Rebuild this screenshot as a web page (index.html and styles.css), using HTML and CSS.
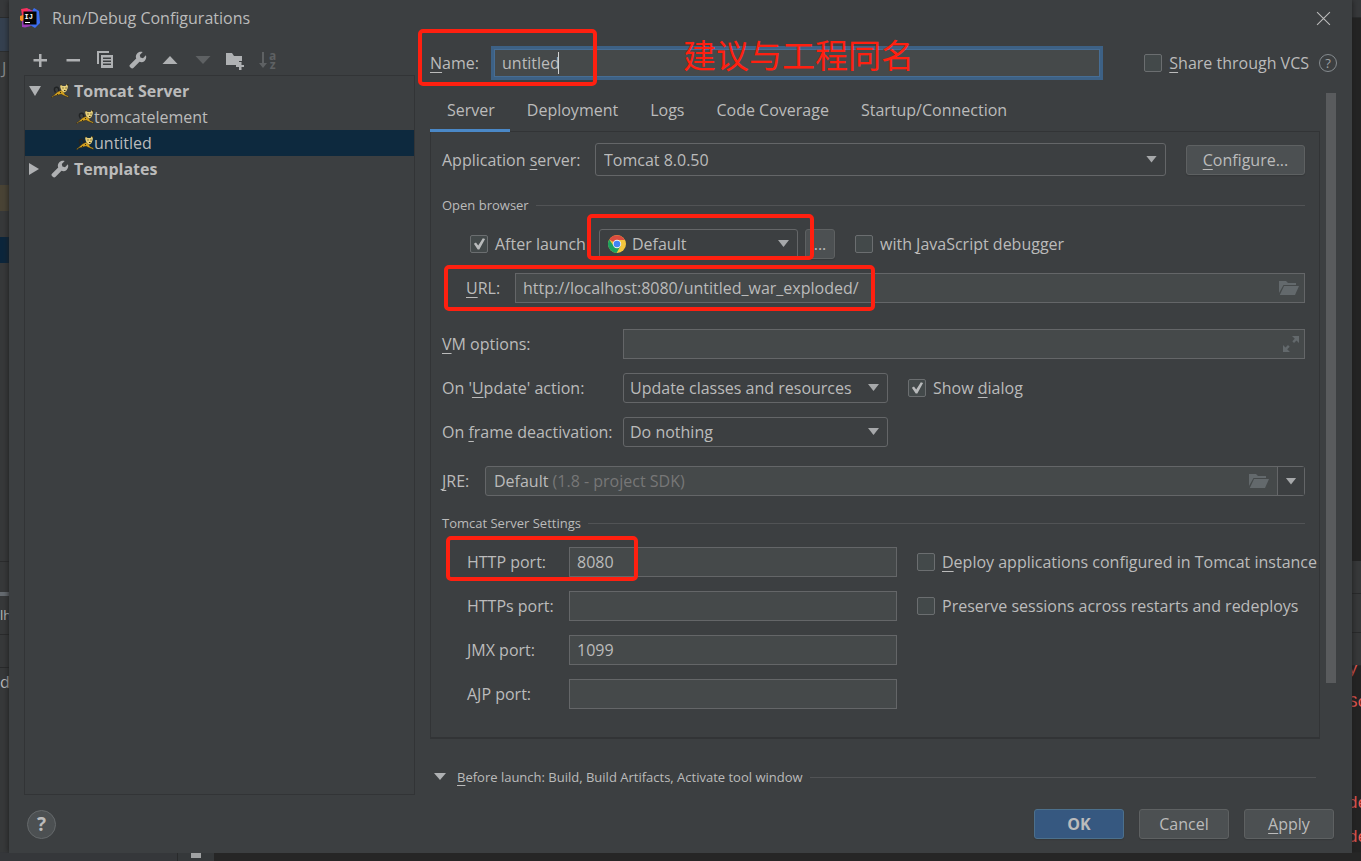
FILE: index.html
```html
<!DOCTYPE html>
<html lang="en">
<head>
<meta charset="utf-8">
<title>Run/Debug Configurations</title>
<link rel="stylesheet" href="styles.css">
</head>
<body>
<svg class="defs" aria-hidden="true">
  <symbol id="wrench" viewBox="0 0 18 18"><path d="M16.9 4.3 14 7.2l-2.6-.6-.6-2.6L13.700 1.100C11.700.400 9.500.900 8.100 2.400 6.800 3.800 6.500 5.700 7.200 7.500L1.200 13.400a1.900 1.900 0 0 0 0 2.800l.6.6a1.900 1.900 0 0 0 2.800 0l5.900-6c1.800.7 3.700.4 5.100-.9 1.500-1.400 2-3.600 1.300-5.600z"/></symbol>
  <symbol id="folder" viewBox="0 0 20 16"><path d="M0 1h7l2 2h8v2H4.500L0 13z"/><path d="M5 6h15l-4 9H.800z"/></symbol>
  <symbol id="tomcat" viewBox="0 0 18 14"><path d="M4.500 8.500C2 5 4 2.800 6 3.300S8 6 7.500 7.500" fill="none" stroke="#202324" stroke-width="1.500"/><path d="M0 13.500 3.500 10.500 7 7.500l3.500-1.300 2.500 2 1 2.300 3.500 1.500v1.500l-5-2-2.500-1.300-3.500 1-3.500.8-1.500 1.500z" fill="#d2a01f" stroke="#24211a" stroke-width=".5"/><path d="M9 1h1.500l1 1h3l1-1.500H17l-.3 3.500-1.200 3-1.500 1.200h-1.500L10.500 6.500 9.500 4z" fill="#e6cf7a"/><path d="M9 .5h1.500v1H9zM16 0h1.500v1.500H16zM11.500 3.500h1v1h-1zM14.500 3.500h1v1h-1zM13 6h1.500v1H13zM9 8h1v1H9zM6 10h1v1H6z" fill="#3a2f12"/></symbol>
</svg>

<div class="backdrop" aria-hidden="true">
  <div class="strip strip-left">
    <div class="s-top"></div><div class="s-blue"></div><div class="s-text s-j">J</div>
    <div class="s-brown"></div><div class="s-gap"></div><div class="s-navy"></div>
    <div class="s-long"></div><div class="s-bar"></div><div class="s-text s-lh">lh</div>
    <div class="s-band"></div><div class="s-text s-d">d</div>
  </div>
  <div class="strip strip-right">
    <div class="s-top"></div><div class="s-editor"></div><div class="s-band"></div><div class="s-band"></div><div class="s-band"></div>
    <div class="console"><p class="cut">y.</p><p>So</p><p class="later">de</p><p>de</p></div>
  </div>
  <div class="dock"><span class="dock-main"></span><span class="dock-tool"><i></i></span></div>
</div>

<main class="dialog">
  <header class="titlebar">
    <svg class="logo" viewBox="0 0 20 20"><path d="M1 1 7 0l5 3-3 7-8 1 1-4z" fill="#fc315e"/><path d="M0 8l6-2 4 10-6-1L0 12z" fill="#f78c25"/><path d="M2 13l6-3 3 8-6 1.500-3-.5z" fill="#9a3bb8"/><path d="M12 3l2-3 5 3 1 12-5 5-5-3z" fill="#3b6df0"/><path d="M9 1l4 2-3 5-4-3z" fill="#c838a0"/><path d="M3.500 3.500h13v13h-13z" fill="#050505"/><text x="4.500" y="10.500" class="logo-text">IJ</text><path d="M5 14h5v1H5z" fill="#fff"/></svg>
    <h1>Run/Debug Configurations</h1>
    <button class="close" aria-label="Close"><svg viewBox="0 0 14 14"><path d="M1 1l12 12M13 1 1 13"/></svg></button>
  </header>

  <div class="content">
    <aside class="sidebar">
      <div class="toolbar">
        <button aria-label="Add"><svg viewBox="0 0 18 18"><path d="M8 3h2.500v5H16v2.500h-5.500V16H8v-5.500H2.500V8H8z"/></svg></button>
        <button aria-label="Remove"><svg viewBox="0 0 18 18"><path d="M2.500 8H16v2.500H2.500z"/></svg></button>
        <button aria-label="Copy"><svg viewBox="0 0 18 18"><path d="M1 0h12v2H3v11H1z"/><path fill-rule="evenodd" d="M5 4h12v13H5zM7 6.500h8V8H7zm0 3h8V11H7zm0 3h8V14H7z"/></svg></button>
        <button aria-label="Edit templates"><svg><use href="#wrench"/></svg></button>
        <button aria-label="Move up"><svg viewBox="0 0 18 18"><path d="M9 5l7.500 8h-15z"/></svg></button>
        <button class="off" aria-label="Move down"><svg viewBox="0 0 18 18"><path d="M1.500 5h15L9 13z"/></svg></button>
        <button aria-label="Create folder"><svg viewBox="0 0 18 18"><path d="M0 2h6l2 3h8v5h-3v4H0z"/><path d="M13 11h2.500v3H18v2h-2.500v3H13v-3h-3v-2h3z"/></svg></button>
        <button class="off sort" aria-label="Sort alphabetically"><svg viewBox="0 0 8 18"><path d="M3 1h2v11h3l-4 5-4-5h3z"/></svg><span><span>a</span><span>z</span></span></button>
      </div>
      <div class="tree" role="tree">
        <div class="node parent" role="treeitem" aria-expanded="true"><svg class="twist" viewBox="0 0 12 12"><path d="M0 1h12L6 11z"/></svg><svg class="cat"><use href="#tomcat"/></svg><b>Tomcat Server</b></div>
        <div class="node child" role="treeitem"><svg class="cat"><use href="#tomcat"/></svg>tomcatelement</div>
        <div class="node child selected" role="treeitem" aria-selected="true"><svg class="cat"><use href="#tomcat"/></svg>untitled</div>
        <div class="node parent" role="treeitem" aria-expanded="false"><svg class="twist" viewBox="0 0 12 12"><path d="M0 0v12l10-6z"/></svg><svg class="tool"><use href="#wrench"/></svg><b>Templates</b></div>
      </div>
    </aside>

    <section class="editor">
      <div class="name-row">
        <label for="name"><u>N</u>ame:</label>
        <div class="name-field"><input id="name" type="text" value="untitled"><i class="caret"></i><span class="note" lang="zh">建议与工程同名</span></div>
        <label class="check share"><input type="checkbox"><span><u>S</u>hare through VCS</span></label>
        <button class="hint" aria-label="About sharing">?</button>
        <i class="mark mark-name"></i>
      </div>

      <div class="scroll-area">
        <div class="scroll-content">
          <nav class="tabs" role="tablist">
            <button role="tab" aria-selected="true" class="active">Server</button><button role="tab">Deployment</button><button role="tab">Logs</button><button role="tab">Code Coverage</button><button role="tab">Startup/Connection</button>
          </nav>
          <div class="panel">
            <div class="row server-row">
              <label for="server">Application <u>s</u>erver:</label>
              <div class="combo grow"><select id="server"><option>Tomcat 8.0.50</option></select></div>
              <button class="btn configure"><span><u>C</u>onfigure...</span></button>
            </div>
            <h2 class="group browser-group">Open browser</h2>
            <div class="row launch-row">
              <label class="check"><input type="checkbox" checked><span>After launch</span></label>
              <div class="combo browser">
                <svg class="chrome" viewBox="0 0 18 18"><circle cx="9" cy="9" r="9" fill="#f2c53d"/><path d="M9 9 1.200 4.500A9 9 0 0 1 16.800 5H9z" fill="#db4c3f"/><path d="M1.200 4.500A9 9 0 0 0 8.500 18L12.500 11 9 9 5 10z" fill="#1ba15f"/><circle cx="9" cy="9" r="4.200" fill="#f4f4f4"/><circle cx="9" cy="9" r="3.300" fill="#4285f4"/></svg>
                <select aria-label="Browser"><option>Default</option></select>
              </div>
              <button class="btn more" aria-label="Browser settings">...</button>
              <label class="check debug"><input type="checkbox"><span>with <u>J</u>avaScript debugger</span></label>
              <i class="mark mark-browser"></i>
            </div>
            <div class="row url-row">
              <label for="url"><u>U</u>RL:</label>
              <div class="field grow"><input id="url" type="text" value="http://localhost:8080/untitled_war_exploded/"><svg class="folder"><use href="#folder"/></svg></div>
              <i class="mark mark-url"></i>
            </div>
            <div class="row option-row vm-row">
              <label for="vm"><u>V</u>M options:</label>
              <div class="field grow"><input id="vm" type="text"><svg class="expand" viewBox="0 0 16 16"><path d="M9 0h7v7l-2.500-2.500L11 7 9.300 5.300l2.500-2.500zM7 16H0V9l2.500 2.500L5 9l1.700 1.700-2.500 2.500z"/></svg></div>
            </div>
            <div class="row option-row">
              <label for="update">On '<u>U</u>pdate' action:</label>
              <div class="combo action"><select id="update"><option>Update classes and resources</option></select></div>
              <label class="check"><input type="checkbox" checked><span>Show <u>d</u>ialog</span></label>
            </div>
            <div class="row option-row">
              <label for="frame">On <u>f</u>rame deactivation:</label>
              <div class="combo action"><select id="frame"><option>Do nothing</option></select></div>
            </div>
            <div class="row jre-row">
              <span id="jre-label"><u>J</u>RE:</span>
              <button class="jre grow" role="combobox" aria-expanded="false" aria-labelledby="jre-label"><span class="jre-value">Default <em>(1.8 - project SDK)</em></span><svg class="folder"><use href="#folder"/></svg><span class="jre-arrow"></span></button>
            </div>
            <h2 class="group settings-group">Tomcat Server Settings</h2>
            <div class="ports">
              <div class="row"><label for="http">HTTP port:</label><input id="http" class="plain" type="text" value="8080"><label class="check"><input type="checkbox"><span><u>D</u>eploy applications configured in Tomcat instance</span></label><i class="mark mark-port"></i></div>
              <div class="row"><label for="https">HTTPs port:</label><input id="https" class="plain" type="text"><label class="check"><input type="checkbox"><span>Preserve sessions across restarts and redeploys</span></label></div>
              <div class="row"><label for="jmx">JMX port:</label><input id="jmx" class="plain" type="text" value="1099"></div>
              <div class="row"><label for="ajp">AJP port:</label><input id="ajp" class="plain" type="text"></div>
            </div>
          </div>
          <h2 class="group before"><svg viewBox="0 0 12 8"><path d="M0 0h12L6 7z"/></svg><span><u>B</u>efore launch: Build, Build Artifacts, Activate tool window</span></h2>
        </div>
        <div class="scrollbar"><div class="thumb"></div></div>
      </div>
    </section>
  </div>

  <footer class="footer">
    <button class="help" aria-label="Help">?</button>
    <div class="actions"><button class="btn primary">OK</button><button class="btn">Cancel</button><button class="btn"><span><u>A</u>pply</span></button></div>
  </footer>
</main>
</body>
</html>
```
FILE: styles.css
```css
* { box-sizing: border-box; }
body {
  margin: 0;
  background: #2b2b2b;
  color: #bbbbbb;
  font: 16px/20px "Open Sans", "Noto Sans CJK SC", sans-serif;
}
button, input, select { font: inherit; color: inherit; margin: 0; }
button { background: none; border: 0; padding: 0; }
p, h1, h2 { margin: 0; font-weight: normal; }
svg { display: block; flex: none; fill: #afb1b3; }
u { text-decoration: underline; text-underline-offset: 3px; text-decoration-thickness: 1px; text-decoration-skip-ink: none; }
em { font-style: normal; color: #777777; }
.defs { position: absolute; width: 0; height: 0; }

/* IDE window showing round the dialog */
.backdrop { position: absolute; inset: 0; z-index: -1; overflow: hidden; background: #262626; }
.strip { position: absolute; top: 0; bottom: 0; width: 9px; overflow: hidden; background: #37393a; }
.strip-left { left: 0; }
.strip-right { right: 0; background: #242424; }
.s-top { height: 18px; background: #37393b; border-bottom: 1px solid #2a2c2d; }
.s-blue { height: 34px; background: #354150; border-bottom: 1px solid #2c2e2f; }
.s-text { display: flex; align-items: center; }
.s-j { height: 133px; padding: 0 0 102px 2px; color: #8b8d8e; }
.s-brown { height: 26px; background: #4a4435; }
.s-gap { height: 26px; }
.s-navy { height: 26px; background: #0c263c; }
.s-long { height: 299px; border-bottom: 1px solid #2b2c2d; }
.s-bar { height: 34px; border-bottom: 4px solid #666b70; }
.s-lh { height: 39px; font-size: 13px; border-bottom: 1px solid #2a2b2c; }
.s-band { height: 33px; background: #37393a; border-bottom: 1px solid #292a2b; }
.s-d { height: 28px; }
.s-editor { height: 543px; }
.s-editor + .s-band + .s-band { height: 39px; }
.console { color: #f05a55; font: 16px/34px "Liberation Mono", monospace; }
.console p { height: 34px; margin-left: -4px; }
.console .cut { height: 20px; line-height: 8px; }
.console .later { margin-top: 67px; }
.dock { position: absolute; left: 0; right: 0; bottom: 0; height: 9px; display: flex; background: #262626; }
.dock-main { width: 178px; background: #35373a; border-right: 1px solid #292a2b; }
.dock-tool { width: 36px; background: #35383a; }
.dock-tool i { display: block; width: 10px; height: 5px; margin: 1px 0 0 13px; background: #a0a2a3; }

.dialog {
  display: flex;
  flex-direction: column;
  min-height: calc(100vh - 8px);
  margin: 0 9px;
  background: #3c3f41;
  box-shadow: 0 0 6px #1c1c1c;
}
.titlebar { display: flex; align-items: center; height: 36px; padding: 0 21px 0 11px; }
.logo { width: 20px; height: 20px; }
.logo-text { fill: #ffffff; font: bold 7px "Liberation Mono", monospace; }
.titlebar h1 { flex: 1; margin-left: 12px; font-size: 16px; }
.close svg { width: 15px; height: 15px; fill: none; stroke: #bbbbbb; }

.content { flex: 1; display: flex; gap: 15px; padding: 0 16px 0 15px; }
.sidebar { flex: 0 0 391px; display: flex; flex-direction: column; }
.toolbar { display: flex; justify-content: space-between; width: 260px; height: 39px; padding: 8px 7px 0; align-items: center; }
.toolbar svg { width: 18px; height: 18px; overflow: visible; }
.toolbar .off svg { fill: #5e6163; }
.toolbar .sort { display: flex; gap: 2px; width: 18px; }
.toolbar .sort svg { width: 8px; }
.sort > span { display: grid; color: #5e6163; font-size: 12px; font-weight: bold; line-height: 9px; }
.tree { flex: 1; border: 1px solid #323436; padding-top: 2px; }
.node { display: flex; align-items: center; height: 26px; }
.parent { padding-left: 4px; }
.parent b { margin-left: 5px; }
.child { padding-left: 51px; }
.selected { background: #0d293e; }
.twist { width: 12px; height: 12px; }
.cat { width: 18px; height: 14px; }
.parent .cat { margin-left: 10px; }
.tool { width: 18px; height: 18px; margin-left: 10px; }

.editor { flex: 1; min-width: 0; display: flex; flex-direction: column; }
.name-row { position: relative; display: flex; align-items: center; height: 34px; margin-top: 10px; }
.name-row > label:first-child { width: 61px; }
.name-field { position: relative; flex: 1; }
.name-field input { display: block; width: 100%; height: 34px; padding: 0 8px; border: 3px solid #3d6185; outline: 1px solid #466d94; outline-offset: -4px; background: #45494a; }
.caret { position: absolute; left: 67px; top: 6px; width: 1px; height: 22px; background: #d0d0d0; }
.note { position: absolute; left: 192px; top: -12px; color: #ff2010; font: 33px/40px "Noto Sans CJK SC", sans-serif; white-space: nowrap; }
.share { margin-left: 41px; }
.hint { width: 18px; height: 18px; margin: 0 -1px 0 10px; border: 1px solid #858b8f; border-radius: 50%; color: #9da0a2; font-size: 13px; line-height: 16px; }

.mark { position: absolute; border: 4px solid #ff2010; border-radius: 5px; pointer-events: none; }
.mark-name { left: -12px; top: -17px; width: 179px; height: 57px; }
.mark-browser { left: 145px; top: -15px; width: 227px; height: 46px; }
.mark-url { left: 2px; top: -8px; width: 431px; height: 46px; }
.mark-port { top: -11px; width: 192px; height: 45px; }

.scroll-area { flex: 1; display: flex; gap: 6px; margin-top: 13px; }
.scroll-content { flex: 1; min-width: 0; }
.scrollbar { width: 10px; }
.thumb { height: 590px; background: #595b5d; }
.tabs { position: relative; display: flex; }
.tabs button { height: 39px; padding: 0 15px 2px 17px; border-bottom: 3px solid transparent; white-space: nowrap; }
.tabs .active { border-bottom-color: #4a88c7; }
.panel { margin-top: -1px; padding: 11px 14px 28px 11px; border: 1px solid #323436; border-bottom-width: 2px; }
.row { position: relative; display: flex; align-items: center; height: 30px; margin-top: 14px; white-space: nowrap; }
.grow { flex: 1; min-width: 0; }
.group { display: flex; align-items: center; gap: 7px; height: 20px; font-size: 13px; }
.group::after { content: ""; flex: 1; height: 1px; background: #515355; }
.browser-group { margin-top: 19px; }
.settings-group { margin-top: 17px; }

.check { display: flex; align-items: center; gap: 7px; white-space: nowrap; }
.check input { appearance: none; flex: none; width: 18px; height: 18px; border: 1px solid #6b6e70; border-radius: 2px; background: #43494a; }
.check input:checked::after { content: ""; display: block; width: 16px; height: 16px; background: #b8babb; clip-path: polygon(18% 48%, 31% 40%, 45% 60%, 74% 14%, 88% 18%, 52% 84%, 42% 84%); }
.combo, .field { position: relative; }
.combo select { appearance: none; display: block; width: 100%; height: 30px; padding: 0 30px 0 6px; border: 1px solid #646668; border-radius: 3px; background: #3c3f41; }
.combo::after, .jre-arrow::after { content: ""; width: 11px; height: 7px; background: #a6a8aa; clip-path: polygon(0 0, 100% 0, 50% 100%); }
.combo::after { position: absolute; right: 9px; top: 50%; margin-top: -4px; pointer-events: none; }
.field input, .plain { display: block; width: 100%; height: 30px; padding: 0 7px; border: 1px solid #646668; background: #45494a; }
.field svg { position: absolute; right: 6px; top: 7px; }
.folder { width: 20px; height: 16px; fill: #63696c; }
.expand { width: 16px; height: 16px; fill: #63696c; }
.btn { height: 30px; border: 1px solid #5e6162; border-radius: 3px; background: #4c5052; box-shadow: 0 1px 1px #35383a; }

.server-row { height: 33px; margin-top: 0; }
.server-row > label { width: 153px; }
.server-row select { height: 33px; padding-left: 8px; }
.configure { width: 119px; margin-left: 20px; }
.launch-row { padding-left: 28px; }
.launch-row > .check:first-child { width: 129px; }
.browser { width: 199px; }
.browser select { padding-left: 32px; }
.chrome { position: absolute; left: 9px; top: 6px; width: 18px; height: 18px; }
.more { width: 30px; margin-left: 7px; }
.debug { margin-left: 20px; }
.url-row { padding-left: 24px; }
.url-row > label { width: 49px; }
.vm-row { margin-top: 26px; }
.option-row > label:first-child { width: 181px; }
.action { width: 265px; margin-right: 20px; }
.jre-row { margin-top: 19px; }
.jre-row > span { width: 43px; }
.jre { display: flex; align-items: center; height: 30px; padding-left: 8px; border: 1px solid #646668; border-radius: 3px; background: #45494a; text-align: left; }
.jre-value { flex: 1; }
.jre-arrow { display: flex; align-items: center; justify-content: center; width: 27px; height: 28px; margin-left: 8px; border-left: 1px solid #646668; background: #3c3f41; }
.ports { padding-left: 25px; }
.ports .row > label:first-child { width: 102px; }
.ports .mark { left: -21px; }
.plain { width: 328px; }
.ports .check { margin-left: 20px; margin-right: -20px; }
.before { height: 20px; margin: 28px 4px 0 4px; }
.before svg { width: 12px; height: 8px; margin-right: 4px; }

.footer { display: flex; align-items: center; justify-content: space-between; height: 58px; padding: 0 18px; }
.help { width: 29px; height: 29px; border: 1px solid #65696b; border-radius: 50%; background: #4c5052; font-size: 19px; font-weight: bold; }
.actions { display: flex; gap: 15px; }
.actions .btn { width: 90px; }
.actions .primary { background: #365880; border-color: #4c708c; font-weight: bold; }
```
